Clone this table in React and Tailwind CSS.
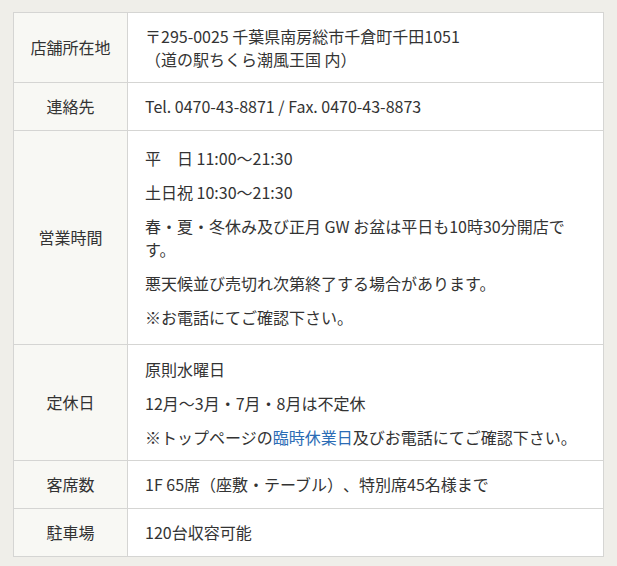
import React from "react";

function Row({ label, children, first, className = "" }) {
  return (
    <div className={`grid grid-cols-[114px_1fr] ${first ? "" : "border-t border-[#d5d5d3]"}`}>
      <div className="flex items-center justify-center border-r border-[#d5d5d3] bg-[#f8f8f4] px-2 text-center">
        {label}
      </div>
      <div className={`bg-white pl-[17px] pr-4 ${className}`}>{children}</div>
    </div>
  );
}

export default function App() {
  return (
    <div
      className="min-h-[566px] w-full bg-[#efeee9] px-[13px] pt-[12px] pb-[11px] text-[16px] leading-[22.5px] text-[#333333] [font-family:'Noto_Sans_CJK_JP','Noto_Sans',sans-serif] [text-spacing-trim:space-all]"
    >
      <div className="border border-[#d5d5d3]">
        <Row label="店舗所在地" first className="py-3">
          <div>〒295-0025 千葉県南房総市千倉町千田1051</div>
          <div>（道の駅ちくら潮風王国 内）</div>
        </Row>
        <Row label="連絡先" className="py-3 leading-[23px]">
          <div>Tel. 0470-43-8871 / Fax. 0470-43-8873</div>
        </Row>
        <Row label="営業時間" className="py-4">
          <div className="flex flex-col gap-[11.5px]">
            <p>平　日 11:00～21:30</p>
            <p>土日祝 10:30～21:30</p>
            <p>春・夏・冬休み及び正月 GW お盆は平日も10時30分開店です。</p>
            <p>悪天候並び売切れ次第終了する場合があります。</p>
            <p>※お電話にてご確認下さい。</p>
          </div>
        </Row>
        <Row label="定休日" className="pt-[12.5px] pb-3">
          <div className="flex flex-col gap-[11.5px]">
            <p>原則水曜日</p>
            <p>12月～3月・7月・8月は不定休</p>
            <p>
              ※トップページの<a className="text-[#2b6cb5]">臨時休業日</a>及びお電話にてご確認下さい。
            </p>
          </div>
        </Row>
        <Row label="客席数" className="py-3 leading-[23px]">
          <div>1F 65席（座敷・テーブル）、特別席45名様まで</div>
        </Row>
        <Row label="駐車場" className="py-3 leading-[23px]">
          <div>120台収容可能</div>
        </Row>
      </div>
    </div>
  );
}
